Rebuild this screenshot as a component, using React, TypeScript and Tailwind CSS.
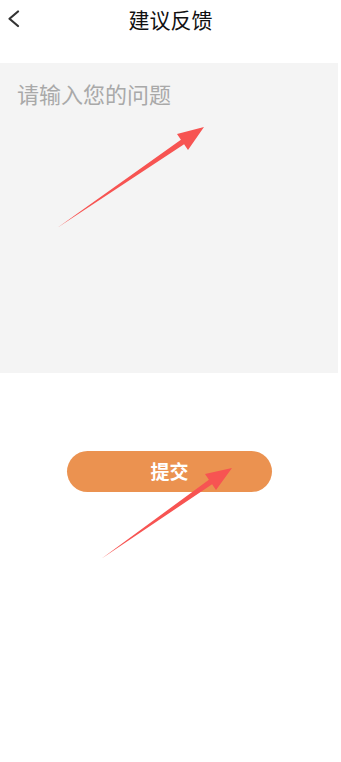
import React from "react"

const font = { fontFamily: '"Noto Sans CJK SC", "Noto Sans", sans-serif' }

function Arrows() {
  return (
    <svg
      className="pointer-events-none absolute left-0 top-0"
      width={341}
      height={762}
      viewBox="0 0 341 762"
    >
      <polygon
        fill="#f75452"
        points="57,228 180.9,139.7 177,134 204,127 188,150 184.1,144.3"
      />
      <polygon
        fill="#f75452"
        points="101,559 208.9,479.7 205,474 232,468 216,490 212.1,484.3"
      />
    </svg>
  )
}

export default function App() {
  return (
    <div className="relative h-[762px] w-[341px] overflow-hidden bg-white" style={font}>
      {/* Header */}
      <div className="relative flex h-[40px] items-center justify-center">
        <button className="absolute left-[6px] top-[8px] p-[2px]">
          <svg width="14" height="18" viewBox="0 0 14 18" fill="none">
            <path d="M10 1.5 L1.5 8.75 L10 16" stroke="#333" strokeWidth="2.2" strokeLinecap="round" strokeLinejoin="round" />
          </svg>
        </button>
        <h1 className="-mt-[1px] text-[21px] leading-none text-[#111]">建议反馈</h1>
      </div>

      {/* Input */}
      <div className="mt-[23px] h-[310px] w-[338px] bg-[#f4f4f4] px-[17px] pt-[17px]">
        <div className="text-[22px] leading-[26px] text-[#a9a9a9]">请输入您的问题</div>
      </div>

      {/* Submit */}
      <div className="mt-[78px] flex justify-center pr-[2px]">
        <button className="flex h-[41px] w-[205px] items-center justify-center rounded-full bg-[#eb9250] text-[19px] font-bold text-white">
          提交
        </button>
      </div>

      <Arrows />
    </div>
  )
}
